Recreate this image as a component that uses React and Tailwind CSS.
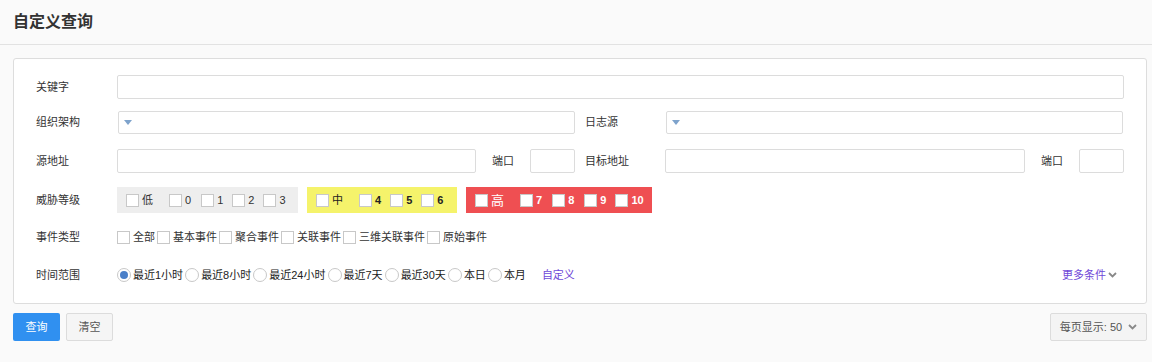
import React from "react";

const font = { fontFamily: '"Liberation Sans","Noto Sans CJK SC",sans-serif' };

function Box({ className = "" }) {
  return <span className={`inline-block w-[13px] h-[13px] border border-[#c8c8c8] bg-white shrink-0 ${className}`} />;
}

function Radio({ checked }) {
  return (
    <span className="inline-flex items-center justify-center w-[14px] h-[14px] rounded-full border border-[#c8c8c8] bg-white shrink-0">
      {checked && <span className="w-[8px] h-[8px] rounded-full bg-[#4a7fc8]" />}
    </span>
  );
}

function Chevron({ className = "" }) {
  return (
    <svg width="9" height="6" viewBox="0 0 9 6" className={className}>
      <path d="M1 1l3.5 3.5L8 1" fill="none" stroke="#888" strokeWidth="1.8" />
    </svg>
  );
}

function Caret() {
  return (
    <svg width="8" height="5" viewBox="0 0 8 5" className="ml-[5px]">
      <path d="M0 0h8L4 5z" fill="#7ea3cc" />
    </svg>
  );
}

function Label({ children, w = "w-[81px]" }) {
  return <span className={`${w} shrink-0 text-[11px] text-[#333] leading-none`}>{children}</span>;
}

function Input({ w }) {
  return <span className={`block h-[24px] border border-[#dcdcdc] rounded-[2px] bg-white ${w}`} />;
}

function Select({ w }) {
  return (
    <span className={`flex items-center h-[23px] border border-[#dcdcdc] rounded-[2px] bg-white ${w}`}>
      <Caret />
    </span>
  );
}

function LevelItem({ label, mr, textCls }) {
  return (
    <span className={`flex items-center ${mr}`}>
      <Box />
      <span className={`ml-[3px] leading-none ${textCls}`}>{label}</span>
    </span>
  );
}

export default function App() {
  const events = ["全部", "基本事件", "聚合事件", "关联事件", "三维关联事件", "原始事件"];
  const ranges = ["最近1小时", "最近8小时", "最近24小时", "最近7天", "最近30天", "本日", "本月"];
  return (
    <div className="w-[1152px] h-[362px] bg-[#fafafa] text-[#333]" style={font}>
      <div className="h-[45px] border-b border-[#e2e2e2] px-[13px] flex items-center">
        <span className="text-[16px] font-bold text-[#333] leading-none">自定义查询</span>
      </div>
      <div className="pl-[13px] pr-[5px] pt-[13px]">
        <div className="h-[246px] border border-[#dddddd] rounded-[3px] bg-white pl-[22px] pr-[22px]">
          {/* row 1 */}
          <div className="mt-[16px] h-[24px] flex items-center">
            <Label>关键字</Label>
            <Input w="flex-1" />
          </div>
          {/* row 2 */}
          <div className="mt-[11px] h-[24px] flex items-center">
            <Label w="w-[82px]">组织架构</Label>
            <Select w="w-[457px]" />
            <span className="w-[10px]" />
            <Label>日志源</Label>
            <Select w="w-[457px]" />
          </div>
          {/* row 3 */}
          <div className="mt-[15px] h-[24px] flex items-center">
            <Label>源地址</Label>
            <Input w="w-[359px]" />
            <span className="w-[16px]" />
            <Label w="w-[38px]">端口</Label>
            <Input w="w-[45px]" />
            <span className="w-[10px]" />
            <Label w="w-[80px]">目标地址</Label>
            <Input w="w-[360px]" />
            <span className="w-[16px]" />
            <Label w="w-[38px]">端口</Label>
            <Input w="w-[45px]" />
          </div>
          {/* row 4 */}
          <div className="mt-[14px] h-[26px] flex items-center">
            <Label>威胁等级</Label>
            <div className="h-[26px] w-[181px] bg-[#eeeeee] flex items-center pl-[9px] text-[11px] text-[#333]">
              <LevelItem label="低" mr="mr-[16px]" />
              <LevelItem label="0" mr="mr-[10px]" />
              <LevelItem label="1" mr="mr-[9px]" />
              <LevelItem label="2" mr="mr-[9px]" />
              <LevelItem label="3" mr="" />
            </div>
            <div className="ml-[9px] h-[26px] w-[150px] bg-[#f5f36b] flex items-center pl-[9px] text-[11px] text-[#222]">
              <LevelItem label="中" mr="mr-[16px]" />
              <LevelItem label="4" mr="mr-[9px]" textCls="font-bold" />
              <LevelItem label="5" mr="mr-[9px]" textCls="font-bold" />
              <LevelItem label="6" mr="" textCls="font-bold" />
            </div>
            <div className="ml-[9px] h-[26px] w-[186px] bg-[#ef4f52] flex items-center pl-[9px] text-[11px] text-white">
              <LevelItem label="高" mr="mr-[16px]" textCls="text-[13px]" />
              <LevelItem label="7" mr="mr-[10px]" textCls="font-bold" />
              <LevelItem label="8" mr="mr-[10px]" textCls="font-bold" />
              <LevelItem label="9" mr="mr-[9px]" textCls="font-bold" />
              <LevelItem label="10" mr="" textCls="font-bold" />
            </div>
          </div>
          {/* row 5 */}
          <div className="mt-[12px] h-[24px] flex items-center">
            <Label>事件类型</Label>
            <div className="flex items-center text-[11px] text-[#333]">
              {events.map((e) => (
                <span key={e} className="flex items-center mr-[2px]">
                  <Box />
                  <span className="ml-[3px] leading-none">{e}</span>
                </span>
              ))}
            </div>
          </div>
          {/* row 6 */}
          <div className="mt-[14px] h-[24px] flex items-center">
            <Label>时间范围</Label>
            <div className="flex items-center text-[11px] text-[#222]">
              {ranges.map((r, i) => (
                <span key={r} className="flex items-center mr-[2px]">
                  <Radio checked={i === 0} />
                  <span className="ml-[2px] leading-none">{r}</span>
                </span>
              ))}
              <span className="ml-[14px] text-[#7048d8] leading-none">自定义</span>
            </div>
            <div className="flex-1" />
            <span className="flex items-center text-[11px] text-[#7048d8] leading-none mr-[7px]">
              更多条件
              <Chevron className="ml-[2px]" />
            </span>
          </div>
        </div>
      </div>
      {/* buttons */}
      <div className="pl-[13px] pr-[5px] mt-[9px] flex items-center">
        <button className="h-[28px] w-[47px] bg-[#3090f0] text-white text-[11px] rounded-[2px] leading-none">查询</button>
        <button className="ml-[6px] h-[28px] w-[47px] bg-[#f5f5f5] border border-[#dcdcdc] text-[#555] text-[11px] rounded-[2px] leading-none">清空</button>
        <div className="flex-1" />
        <button className="h-[28px] w-[97px] bg-[#f4f4f4] border border-[#dcdcdc] text-[#555] text-[11px] rounded-[2px] leading-none flex items-center justify-center">
          每页显示: 50
          <Chevron className="ml-[6px]" />
        </button>
      </div>
    </div>
  );
}
